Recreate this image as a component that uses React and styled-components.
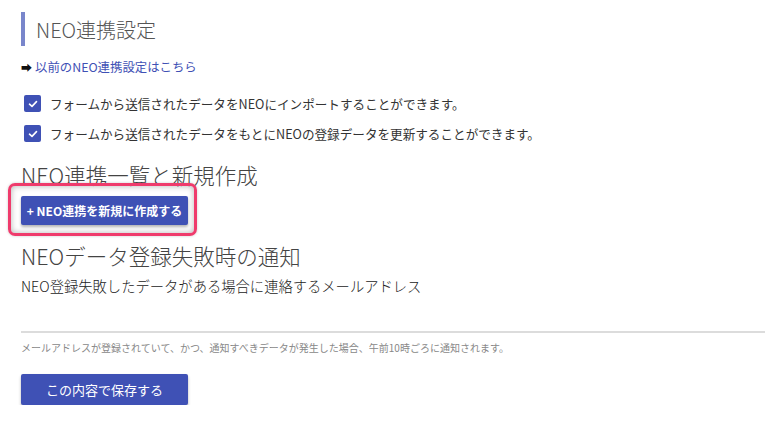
import React from 'react';
import styled, { createGlobalStyle } from 'styled-components';

const GlobalStyle = createGlobalStyle`
    html, body {
        margin: 0;
        padding: 0;
        background: #fff;
    }
    body {
        font-family: "Noto Sans CJK JP", "Noto Sans", "Liberation Sans", sans-serif;
        color: #333;
    }
`;

const Page = styled.div`
    padding: 12px 0 0 21px;
    width: 744px;
`;

const PageTitle = styled.h1`
    display: flex;
    align-items: center;
    height: 34px;
    margin: 0;
    padding-left: 11px;
    border-left: 4px solid #7986cb;
    font-size: 20px;
    font-weight: 300;
    color: #555;
`;

const OldLink = styled.div`
    display: flex;
    align-items: center;
    gap: 3px;
    margin-top: 12px;
    height: 18px;
    font-size: 12.4px;

    .arrow{
        color: #111;
        font-size: 11px;
    }
    a{
        color: #3f51b5;
        text-decoration: none;
    }
`;

const CheckList = styled.div`
    display: flex;
    flex-direction: column;
    gap: 13px;
    margin: 19px 0 0 3px;
`;

const CheckRow = styled.label`
    display: flex;
    align-items: center;
    gap: 9px;
    height: 17px;
    font-size: 12.6px;
    color: #333;
`;

const CheckBox = styled.span`
    display: flex;
    align-items: center;
    justify-content: center;
    width: 17px;
    height: 17px;
    border-radius: 2px;
    background: #3f51b5;
`;

const Heading = styled.h2`
    margin: ${props => props.$top}px 0 0;
    font-size: 21.5px;
    line-height: 21px;
    font-weight: 300;
    color: #444;
`;

const Highlight = styled.div`
    display: inline-block;
    margin: -2px 0 0 -13px;
    padding: 10px 6px 8px 10px;
    border: 3px solid #ef3b6c;
    border-radius: 7px;
    box-shadow: inset 0 0 6px rgba(0, 0, 0, 0.3), 0 0 3px rgba(0, 0, 0, 0.2);
`;

const Button = styled.button`
    display: flex;
    align-items: center;
    justify-content: center;
    width: 167px;
    height: ${props => props.$height}px;
    padding: 0;
    border: none;
    border-radius: 2px;
    background: #3f51b5;
    color: #fff;
    font-family: inherit;
    font-size: ${props => props.$size}px;
    font-weight: ${props => props.$bold ? 700 : 400};
    box-shadow: 0 2px 3px rgba(0, 0, 0, 0.3);
    cursor: pointer;
`;

const Description = styled.p`
    margin: 10px 0 0;
    font-size: 14.3px;
    line-height: 20px;
    font-weight: 300;
    color: #1a1a1a;
`;

const MailInput = styled.input`
    display: block;
    box-sizing: border-box;
    width: 100%;
    height: 30px;
    margin-top: 7px;
    padding: 0;
    border: none;
    border-bottom: 2px solid #dcdcdc;
    outline: none;
    font-family: inherit;
    font-size: 14px;
`;

const Hint = styled.p`
    margin: 8px 0 0;
    font-size: 10px;
    line-height: 14px;
    color: #888;
`;

const SaveArea = styled.div`
    margin-top: 19px;
`;

const Check = () => (
    <svg width="10" height="8" viewBox="0 0 10 8">
        <path d="M1.5 4.2 L4 6.4 L8.5 1.6" fill="none" stroke="#fff" strokeWidth="1.6" strokeLinecap="round" strokeLinejoin="round" />
    </svg>
);

const options = [
    'フォームから送信されたデータをNEOにインポートすることができます。',
    'フォームから送信されたデータをもとにNEOの登録データを更新することができます。',
];

const App = () => {
    return (
        <>
            <GlobalStyle />
            <Page>
                <PageTitle>NEO連携設定</PageTitle>
                <OldLink>
                    <span className="arrow">➡</span>
                    <a href="#">以前のNEO連携設定はこちら</a>
                </OldLink>
                <CheckList>
                    {options.map((text, i) => (
                        <CheckRow key={i}>
                            <CheckBox><Check /></CheckBox>
                            {text}
                        </CheckRow>
                    ))}
                </CheckList>

                <Heading $top={22}>NEO連携一覧と新規作成</Heading>
                <Highlight>
                    <Button $height={29} $size={12} $bold>+ NEO連携を新規に作成する</Button>
                </Highlight>

                <Heading $top={9}>NEOデータ登録失敗時の通知</Heading>
                <Description>NEO登録失敗したデータがある場合に連絡するメールアドレス</Description>
                <MailInput type="email" />
                <Hint>メールアドレスが登録されていて、かつ、通知すべきデータが発生した場合、午前10時ごろに通知されます。</Hint>

                <SaveArea>
                    <Button $height={31} $size={13}>この内容で保存する</Button>
                </SaveArea>
            </Page>
        </>
    );
};

export default App;
